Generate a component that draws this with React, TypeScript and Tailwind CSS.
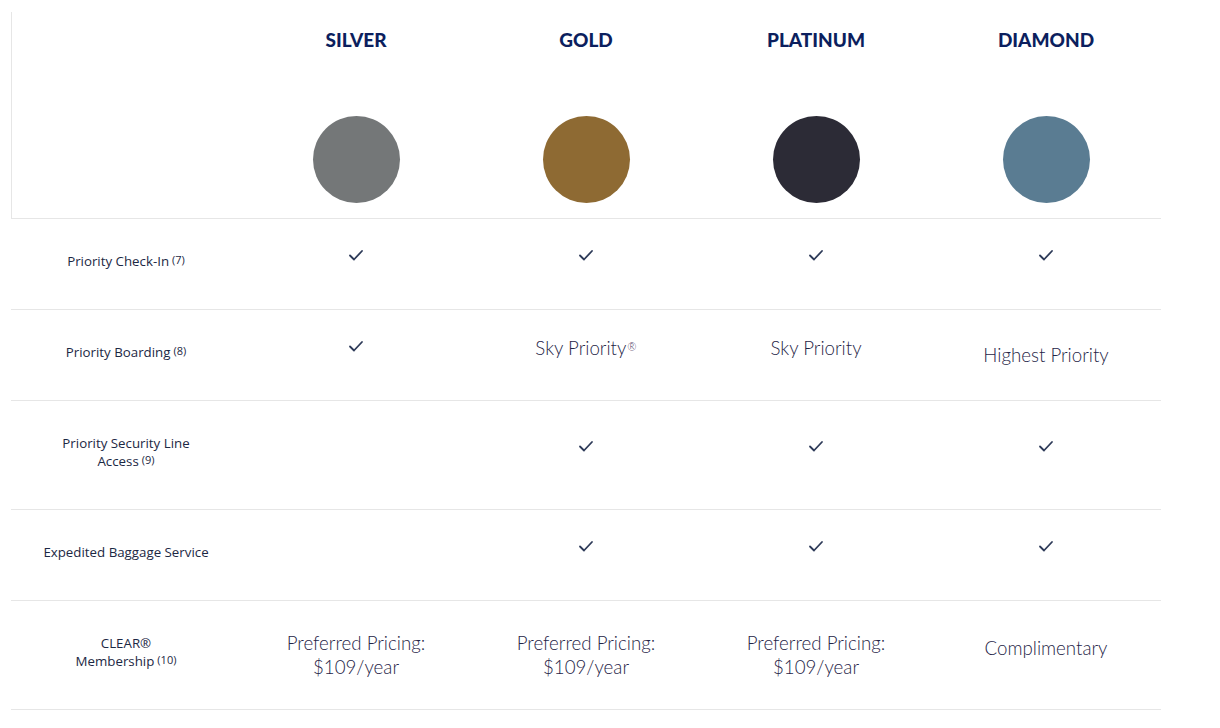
import React from 'react';

const tiers = [
  { name: 'SILVER', color: 'bg-[#747778]' },
  { name: 'GOLD', color: 'bg-[#8e6a33]' },
  { name: 'PLATINUM', color: 'bg-[#2c2b36]' },
  { name: 'DIAMOND', color: 'bg-[#5a7c92]' },
];

const Check = () => (
  <svg width="16" height="14" viewBox="0 0 16 14" fill="none" className="block">
    <path d="M2 7.5 L6 11.5 L14 3" stroke="#2d3a58" strokeWidth="1.8" strokeLinecap="round" strokeLinejoin="round" />
  </svg>
);

const Sup = ({ children }: { children: React.ReactNode }) => (
  <sup className="text-[11px] relative -top-[2px] ml-[3px]">{children}</sup>
);

type Cell =
  | { kind: 'check' }
  | { kind: 'empty' }
  | { kind: 'text'; node: React.ReactNode; lift?: boolean };

type Row = { label: React.ReactNode; height: string; cells: Cell[] };

const check: Cell = { kind: 'check' };
const empty: Cell = { kind: 'empty' };

const pricing: Cell = {
  kind: 'text',
  node: (
    <>
      Preferred Pricing:
      <br />
      $109/year
    </>
  ),
};

const rows: Row[] = [
  {
    label: <>Priority Check-In<Sup>(7)</Sup></>,
    height: 'h-[91px]',
    cells: [check, check, check, check],
  },
  {
    label: <>Priority Boarding<Sup>(8)</Sup></>,
    height: 'h-[91px]',
    cells: [
      check,
      { kind: 'text', lift: true, node: <>Sky Priority<sup className="text-[11px] relative -top-[4px] ml-[1px] text-[#4a3560]">®</sup></> },
      { kind: 'text', lift: true, node: 'Sky Priority' },
      { kind: 'text', node: 'Highest Priority' },
    ],
  },
  {
    label: (
      <>
        Priority Security Line
        <br />
        Access<Sup>(9)</Sup>
      </>
    ),
    height: 'h-[109px]',
    cells: [empty, check, check, check],
  },
  {
    label: 'Expedited Baggage Service',
    height: 'h-[91px]',
    cells: [empty, check, check, check],
  },
  {
    label: (
      <>
        CLEAR®
        <br />
        Membership<Sup>(10)</Sup>
      </>
    ),
    height: 'h-[109px]',
    cells: [pricing, pricing, pricing, { kind: 'text', lift: true, node: 'Complimentary' }],
  },
];

const App: React.FC = () => {
  return (
    <div className="w-[1220px] h-[728px] bg-white overflow-hidden font-['Lato','Liberation_Sans',sans-serif]">
      <div className="ml-[11px] w-[1150px]">
        {/* header */}
        <div className="grid grid-cols-5 h-[219px] border-b border-[#e6e6e6]">
          <div className="mt-[12px] border-l border-[#e6e6e6]" />
          {tiers.map((t) => (
            <div key={t.name} className="flex flex-col items-center">
              <div className="mt-[29px] text-[19px] leading-[22px] font-black text-[#0c1f5e]">
                {t.name}
              </div>
              <div className={`mt-[65px] w-[87px] h-[87px] rounded-full ${t.color}`} />
            </div>
          ))}
        </div>

        {rows.map((r, i) => (
          <div key={i} className={`grid grid-cols-5 ${r.height} border-b border-[#e6e6e6]`}>
            <div className="flex items-center justify-center pb-[7px] text-center font-['Open_Sans',sans-serif] text-[13.3px] leading-[18px] text-[#1c2844]">
              <div>{r.label}</div>
            </div>
            {r.cells.map((c, j) => {
              if (c.kind === 'check')
                return (
                  <div key={j} className="flex items-center justify-center pb-[19px]">
                    <Check />
                  </div>
                );
              if (c.kind === 'empty') return <div key={j} />;
              return (
                <div
                  key={j}
                  className={`flex items-center justify-center text-center text-[18.7px] leading-[24px] font-light text-[#1f2547] ${
                    c.lift ? 'pb-[15px]' : ''
                  }`}
                >
                  <div>{c.node}</div>
                </div>
              );
            })}
          </div>
        ))}
      </div>
    </div>
  );
};

export default App;
